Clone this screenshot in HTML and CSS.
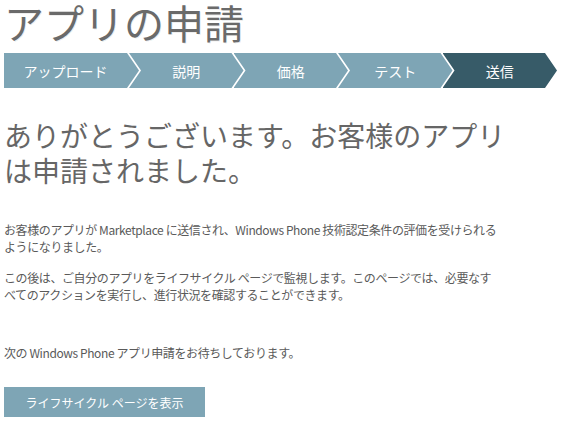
FILE: index.html
```html
<!DOCTYPE html>
<html lang="ja">
<head>
    <meta charset="UTF-8">
    <meta name="viewport" content="width=device-width, initial-scale=1.0">
    <title>アプリの申請</title>
    <link rel="stylesheet" href="styles.css">
</head>
<body>
    <div class="page">
        <h1 class="title">アプリの申請</h1>
        <ol class="steps">
            <li class="step">アップロード</li>
            <li class="step">説明</li>
            <li class="step">価格</li>
            <li class="step">テスト</li>
            <li class="step current">送信</li>
        </ol>

        <h2 class="message">ありがとうございます。お客様のアプリは申請されました。</h2>

        <p class="text first">お客様のアプリが Marketplace に送信され、Windows Phone 技術認定条件の評価を受けられるようになりました。</p>
        <p class="text">この後は、ご自分のアプリをライフサイクル ページで監視します。このページでは、必要なすべてのアクションを実行し、進行状況を確認することができます。</p>
        <p class="text last">次の Windows Phone アプリ申請をお待ちしております。</p>

        <button class="button" type="button">ライフサイクル ページを表示</button>
    </div>
</body>
</html>
```

FILE: styles.css
```css
* {
    box-sizing: border-box;
}
body {
    margin: 0;
    padding: 0;
    background-color: #fff;
    font-family: "Noto Sans CJK JP", "Noto Sans", sans-serif;
    color: #5a5a5a;
}
.page {
    padding: 0 4px;
}
.title {
    margin: 0;
    font-size: 40px;
    line-height: 44px;
    font-weight: normal;
    color: #6a6a6a;
    text-shadow: 1px 1px 0 rgba(0, 0, 0, 0.08);
}
.steps {
    display: flex;
    list-style: none;
    margin: 9px 0 0;
    padding: 0;
    width: 553px;
    height: 35px;
}
.step {
    flex: 1;
    display: flex;
    align-items: center;
    justify-content: center;
    margin-left: -10px;
    padding-left: 12px;
    padding-right: 12px;
    background-color: #7ea5b5;
    color: #fff;
    font-size: 14px;
    clip-path: polygon(0 0, calc(100% - 12px) 0, 100% 50%, calc(100% - 12px) 100%, 0 100%, 12px 50%);
}
.step:first-child {
    flex: 0 0 135px;
    margin-left: 0;
    padding-left: 0;
    clip-path: polygon(0 0, calc(100% - 12px) 0, 100% 50%, calc(100% - 12px) 100%, 0 100%);
}
.step.current {
    background-color: #375b68;
}
.message {
    margin: 30px 0 0;
    font-size: 28px;
    line-height: 35px;
    font-weight: normal;
    color: #666;
    width: 510px;
}
.text {
    margin: 14px 0 0;
    font-size: 12px;
    line-height: 17px;
    letter-spacing: -0.4px;
    width: 496px;
}
.text.first {
    margin-top: 33px;
}
.text.last {
    margin-top: 41px;
}
.button {
    display: block;
    margin-top: 26px;
    width: 201px;
    height: 30px;
    padding: 0;
    border: none;
    background-color: #7ea5b5;
    color: #fff;
    font-family: inherit;
    font-size: 12px;
    cursor: pointer;
}
```
